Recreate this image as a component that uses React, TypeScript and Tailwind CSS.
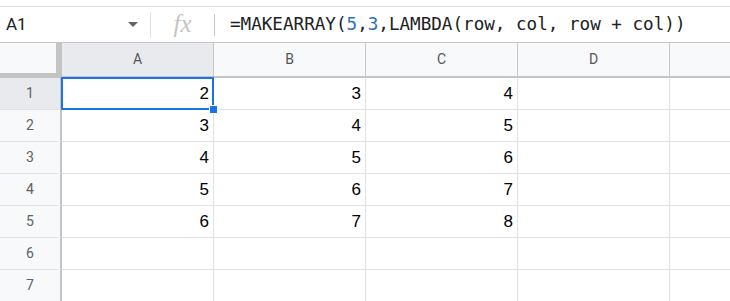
const cols = ['A', 'B', 'C', 'D'];
const data = [
  [2, 3, 4],
  [3, 4, 5],
  [4, 5, 6],
  [5, 6, 7],
  [6, 7, 8],
  [null, null, null],
  [null, null, null],
];

export default function App() {
  return (
    <div className="w-[730px] h-[301px] overflow-hidden bg-white font-['Liberation_Sans',Arial,sans-serif]">
      {/* top strip */}
      <div className="h-[7px] border-b border-[#e0e0e0]" />

      {/* formula bar */}
      <div className="h-[36px] flex items-center border-b border-[#c7c7c7]">
        <div className="w-[150px] h-full flex items-center pl-[6px] pr-[12px]">
          <span className="text-[17px] text-[#202124] font-['Roboto',sans-serif]">A1</span>
          <svg className="ml-auto" width="10" height="5" viewBox="0 0 10 5">
            <path d="M0 0h10L5 5z" fill="#5f6368" />
          </svg>
        </div>
        <div className="w-px h-[26px] bg-[#e0e0e0]" />
        <div className="w-[63px] h-full flex items-center justify-center">
          <span className="text-[25px] italic text-[#c4c4c4] font-['Liberation_Serif',serif] leading-none -mt-[2px]">fx</span>
        </div>
        <div className="w-px h-[22px] bg-[#c9c9c9]" />
        <div className="pl-[15px] text-[17.6px] text-[#202124] font-['DejaVu_Sans_Mono',monospace] whitespace-pre">
          =MAKEARRAY(<span className="text-[#2e6fbf]">5</span>,<span className="text-[#2e6fbf]">3</span>,LAMBDA(row, col, row + col))
        </div>
      </div>

      {/* column headers */}
      <div className="flex h-[35px]">
        <div className="w-[62px] shrink-0 bg-[#f8f9fa] border-r-[6px] border-b-[5px] border-[#c4c4c4]" />
        {cols.map((c, i) => (
          <div
            key={c}
            className={
              'w-[152px] shrink-0 flex items-center justify-center border-r border-b-2 border-r-[#c7c7c7] border-b-[#c4c4c4] text-[14px] text-[#555] font-["Roboto",sans-serif] ' +
              (i === 0 ? 'bg-[#e8eaed]' : 'bg-[#f8f9fa]')
            }
          >
            {c}
          </div>
        ))}
        <div className="flex-1 bg-[#f8f9fa] border-b-2 border-[#c4c4c4]" />
      </div>

      {/* rows */}
      {data.map((row, r) => (
        <div key={r} className="flex h-[32px]">
          <div
            className={
              'w-[62px] shrink-0 flex items-center justify-center border-r-2 border-r-[#c4c4c4] border-b border-b-[#e2e2e3] text-[14px] text-[#5f6368] font-["Roboto",sans-serif] ' +
              (r === 0 ? 'bg-[#e8eaed]' : 'bg-[#f8f9fa]')
            }
          >
            {r + 1}
          </div>
          {cols.map((c, i) => (
            <div
              key={c}
              className="relative w-[152px] shrink-0 flex items-center justify-end pr-[4px] pt-[1px] border-r border-b border-[#e2e2e3] text-[17px] text-black"
            >
              {i < 3 ? row[i] : null}
              {r === 0 && i === 0 && (
                <>
                  <div className="absolute z-10 -left-px -top-px right-[-1px] bottom-[-1px] border-2 border-[#1a73e8]" />
                  <div className="absolute z-20 right-[-5px] bottom-[-5px] w-[9px] h-[9px] bg-[#1a73e8] border border-white" />
                </>
              )}
            </div>
          ))}
          <div className="flex-1 border-b border-[#e2e2e3]" />
        </div>
      ))}
    </div>
  );
}
